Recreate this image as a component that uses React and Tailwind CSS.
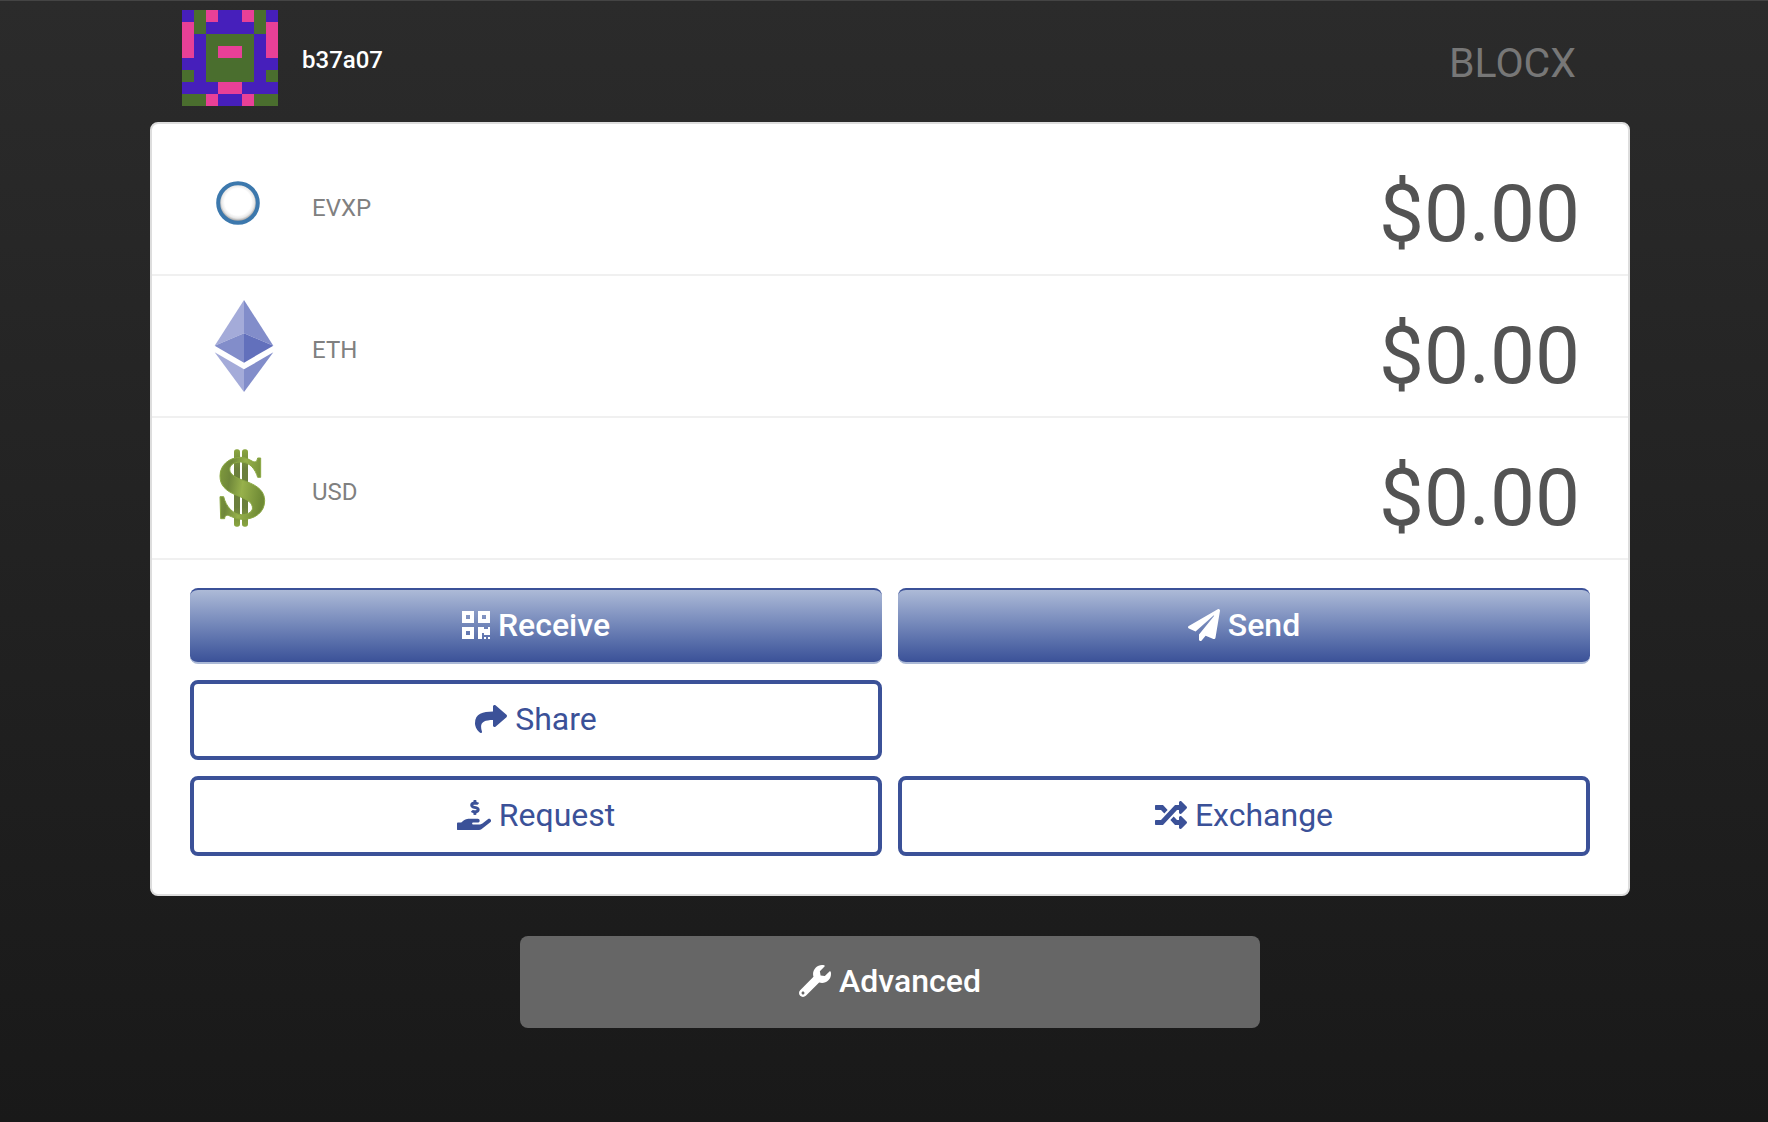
import { FaQrcode, FaPaperPlane, FaShare, FaHandHoldingUsd, FaRandom, FaWrench } from "react-icons/fa";

const PALETTE = { P: "#461fbb", G: "#4a6e2e", K: "#e84097" };

const BLOCKIE = [
  "PGKPPKGP",
  "KGPPPPGK",
  "KPGGGGPK",
  "KPGKKGPK",
  "PPGGGGPP",
  "GPGGGGPG",
  "PPPKKPPP",
  "GGKPPKGG",
];

function Blockie() {
  return (
    <svg viewBox="0 0 8 8" className="size-24" shapeRendering="crispEdges" role="img" aria-label="Account avatar">
      {BLOCKIE.map((row, y) =>
        row.split("").map((c, x) => <rect key={`${x}-${y}`} x={x} y={y} width="1" height="1" fill={PALETTE[c]} />)
      )}
    </svg>
  );
}

function RingIcon() {
  return (
    <svg viewBox="0 0 44 46" className="h-[46px] w-11" aria-hidden="true">
      <defs>
        <radialGradient id="ring-fill" cx="0.5" cy="0.47" r="0.5">
          <stop offset="0.7" stopColor="#ffffff" />
          <stop offset="0.86" stopColor="#e9e9e9" />
          <stop offset="1" stopColor="#a0a0a0" />
        </radialGradient>
      </defs>
      <circle cx="22" cy="22" r="19" fill="url(#ring-fill)" />
      <circle cx="22" cy="22" r="19.8" fill="none" stroke="#3c78ad" strokeWidth="4" />
    </svg>
  );
}

function EthIcon() {
  return (
    <svg viewBox="79 60 177 276" className="h-[92px] w-[59px]" overflow="visible" aria-hidden="true">
      <path d="M163 60 75 197l88-37z" fill="#a4abd9" />
      <path d="M163 60v100l88 37z" fill="#828dca" />
      <path d="M75 197l88-37v88z" fill="#828dca" />
      <path d="M163 160v88l88-51z" fill="#6270bc" />
      <path d="M75 217l88 51v68z" fill="#a4abd9" />
      <path d="M251 217l-88 51v68z" fill="#828dca" />
    </svg>
  );
}

function UsdIcon() {
  return (
    <svg viewBox="78 506 162 236" className="h-20 w-[54px]" aria-hidden="true">
      <defs>
        <linearGradient id="usd-body" x1="0" y1="0.1" x2="1" y2="0.3">
          <stop offset="0" stopColor="#7f9a3c" />
          <stop offset="0.25" stopColor="#6f873a" />
          <stop offset="0.55" stopColor="#97b14b" />
          <stop offset="1" stopColor="#6f8a35" />
        </linearGradient>
        <linearGradient id="usd-bar" x1="0" y1="0" x2="0" y2="1">
          <stop offset="0" stopColor="#8aa640" />
          <stop offset="0.25" stopColor="#6b7f3c" />
          <stop offset="0.75" stopColor="#6b7f3c" />
          <stop offset="1" stopColor="#8aa640" />
        </linearGradient>
      </defs>
      <rect x="132" y="508" width="18" height="232" rx="8" fill="url(#usd-bar)" />
      <rect x="156" y="508" width="18" height="232" rx="8" fill="url(#usd-bar)" />
      <path
        d="M212 534V592H203C196 568 180 546 152 546C128 546 116 558 120 574C125 588 145 596 170 605C205 618 224 635 224 662C224 697 195 718 158 718C135 718 120 706 112 706C106 706 104 712 104 716H92L90 650H101C108 680 130 704 155 704C178 704 190 692 187 680C184 664 165 656 140 646C105 632 90 615 90 588C90 555 118 532 152 532C175 532 185 546 195 546C200 546 201 540 203 534Z"
        fill="url(#usd-body)"
        stroke="#8aa843"
        strokeWidth="3"
      />
    </svg>
  );
}

const BALANCES = [
  { name: "EVXP", amount: "$0.00", Icon: RingIcon },
  { name: "ETH", amount: "$0.00", Icon: EthIcon },
  { name: "USD", amount: "$0.00", Icon: UsdIcon },
];

function BalanceRow({ name, amount, Icon }) {
  return (
    <li className="flex h-[142px] items-center border-b-2 border-[#f0f0f0] pl-16 pr-12">
      <span className="flex w-24 items-center">
        <Icon />
      </span>
      <span className="pt-2 text-2xl text-[#808080]">{name}</span>
      <span className="ml-auto pt-5 text-[80px] leading-none text-[#535353]">{amount}</span>
    </li>
  );
}

function SolidButton({ icon, children }) {
  return (
    <button
      type="button"
      className="flex h-[76px] items-center justify-center gap-2 rounded-lg border-t-2 border-b-2 border-t-[#3b5198] border-b-[#abb9d6] bg-linear-to-b from-[#adbad7] to-[#3b5198] pb-[3px] text-[32px] font-medium text-white"
    >
      {icon}
      {children}
    </button>
  );
}

function OutlineButton({ icon, children }) {
  return (
    <button
      type="button"
      className="flex h-20 items-center justify-center gap-2 rounded-lg border-4 border-[#3b5198] bg-white pb-[3px] text-[32px] text-[#3b5198]"
    >
      {icon}
      {children}
    </button>
  );
}

export default function App() {
  return (
    <div className="min-h-screen border-t border-[#444444] bg-linear-to-b from-[#2b2b2b] to-[#191919] pb-20 pl-3 font-[Roboto,sans-serif]">
      <div className="mx-auto max-w-[1480px]">
        <header className="flex h-[121px] items-start justify-between pt-[9px] pl-8 pr-[54px]">
          <div className="flex items-center gap-6">
            <Blockie />
            <span className="pt-1 text-2xl font-medium text-white">b37a07</span>
          </div>
          <h1 className="flex h-24 items-center pt-3 text-[41px] text-[#777777]">BLOCX</h1>
        </header>

        <main>
          <section className="rounded-lg border-2 border-[#dddddd] bg-white pt-[10px] pb-[38px]">
            <ul>
              {BALANCES.map((b) => (
                <BalanceRow key={b.name} {...b} />
              ))}
            </ul>
            <div className="grid grid-cols-2 gap-4 px-[38px] pt-7">
              <SolidButton icon={<FaQrcode className="h-8 w-7" />}>Receive</SolidButton>
              <SolidButton icon={<FaPaperPlane className="size-8" />}>Send</SolidButton>
              <div className="col-span-2 grid grid-cols-2 gap-4">
                <OutlineButton icon={<FaShare className="size-8" />}>Share</OutlineButton>
              </div>
              <OutlineButton icon={<FaHandHoldingUsd className="h-8 w-[34px]" />}>Request</OutlineButton>
              <OutlineButton icon={<FaRandom className="size-8" />}>Exchange</OutlineButton>
            </div>
          </section>

          <button
            type="button"
            className="mx-auto mt-10 flex h-[92px] w-1/2 items-center justify-center gap-2 rounded-lg bg-[#666666] pb-[3px] text-[32px] font-medium text-white"
          >
            <FaWrench className="size-8" />
            Advanced
          </button>
        </main>
      </div>
    </div>
  );
}
